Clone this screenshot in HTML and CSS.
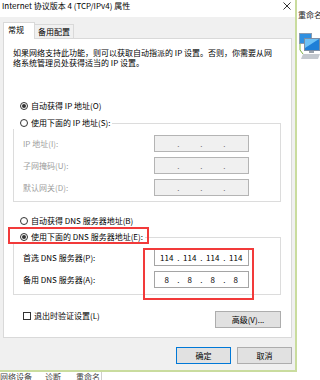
FILE: index.html
```html
<!DOCTYPE html>
<html lang="zh-CN">
<head>
    <meta charset="UTF-8">
    <meta name="viewport" content="width=device-width, initial-scale=1.0">
    <title>Internet 协议版本 4 (TCP/IPv4) 属性</title>
    <link rel="stylesheet" href="styles.css">
</head>
<body>

    <div class="top">
        <div class="dialog">
            <div class="titlebar">
                <span class="title">Internet 协议版本 4 (TCP/IPv4) 属性</span>
                <span class="close">
                    <svg width="8" height="8" viewBox="0 0 8 8"><path d="M0.5 0.5 L7.5 7.5 M7.5 0.5 L0.5 7.5" stroke="#333" stroke-width="1"/></svg>
                </span>
            </div>

            <div class="tabs">
                <div class="tab active">常规</div>
                <div class="tab">备用配置</div>
            </div>

            <div class="panel">
                <p class="intro">如果网络支持此功能，则可以获取自动指派的 IP 设置。否则，你需要从网络系统管理员处获得适当的 IP 设置。</p>

                <div class="option checked"><span class="radio"></span>自动获得 IP 地址(O)</div>

                <fieldset class="group">
                    <legend class="option"><span class="radio"></span>使用下面的 IP 地址(S):</legend>
                    <div class="field-row disabled">
                        <span class="label">IP 地址(I):</span>
                        <div class="ipbox"><span class="octet"></span><span class="dot">.</span><span class="octet"></span><span class="dot">.</span><span class="octet"></span><span class="dot">.</span><span class="octet"></span></div>
                    </div>
                    <div class="field-row disabled">
                        <span class="label">子网掩码(U):</span>
                        <div class="ipbox"><span class="octet"></span><span class="dot">.</span><span class="octet"></span><span class="dot">.</span><span class="octet"></span><span class="dot">.</span><span class="octet"></span></div>
                    </div>
                    <div class="field-row disabled">
                        <span class="label">默认网关(D):</span>
                        <div class="ipbox"><span class="octet"></span><span class="dot">.</span><span class="octet"></span><span class="dot">.</span><span class="octet"></span><span class="dot">.</span><span class="octet"></span></div>
                    </div>
                </fieldset>

                <div class="option option-dns"><span class="radio"></span>自动获得 DNS 服务器地址(B)</div>

                <fieldset class="group group-dns">
                    <legend class="option checked"><span class="radio"></span>使用下面的 DNS 服务器地址(E):</legend>
                    <div class="field-row">
                        <span class="label">首选 DNS 服务器(P):</span>
                        <div class="ipbox"><span class="octet">114</span><span class="dot">.</span><span class="octet">114</span><span class="dot">.</span><span class="octet">114</span><span class="dot">.</span><span class="octet">114</span></div>
                    </div>
                    <div class="field-row">
                        <span class="label">备用 DNS 服务器(A):</span>
                        <div class="ipbox"><span class="octet">8</span><span class="dot">.</span><span class="octet">8</span><span class="dot">.</span><span class="octet">8</span><span class="dot">.</span><span class="octet">8</span></div>
                    </div>
                </fieldset>

                <div class="bottom-row">
                    <div class="check-row"><span class="checkbox"></span>退出时验证设置(L)</div>
                    <button class="btn btn-adv">高级(V)...</button>
                </div>

                <!-- red annotation boxes -->
                <div class="mark mark-radio"></div>
                <div class="mark mark-dns"></div>
            </div>

            <div class="actions">
                <button class="btn default">确定</button>
                <button class="btn">取消</button>
            </div>
        </div>

        <div class="side">
            <div class="side-label">重命名此连接</div>
            <svg class="net-icon" width="23" height="28" viewBox="0 0 23 28">
                <rect x="2" y="1" width="13" height="11" fill="#8a9bb0"/>
                <rect x="3" y="2" width="11" height="9" fill="#2f8fe0"/>
                <rect x="7" y="6" width="16" height="13" fill="#7d8ea4"/>
                <rect x="8" y="7" width="14" height="11" fill="#1f7fd8"/>
                <path d="M8 7 L22 7 L8 16 Z" fill="#6ec1f6"/>
                <rect x="12" y="19" width="5" height="2" fill="#9aa3ad"/>
                <path d="M6 22 L23 22 L21 27 L4 27 Z" fill="#c4c9cf"/>
                <path d="M3 12 L3 18 L6 22" stroke="#7cb342" stroke-width="1" fill="none"/>
            </svg>
        </div>
    </div>

    <div class="cmdbar">
        <span class="cmd">网络设备</span>
        <span class="cmd cmd-diag">诊断</span>
        <span class="cmd cmd-rename">重命名</span>
        <span class="cmd-sep"></span>
    </div>

</body>
</html>
```

FILE: styles.css
```css
* {
    box-sizing: border-box;
}

body {
    margin: 0;
    width: 320px;
    height: 380px;
    overflow: hidden;
    background-color: #fff;
    font-family: "Noto Sans CJK SC", "Noto Sans", sans-serif;
    font-size: 8px;
    color: #000;
}

.top {
    display: flex;
    height: 372px;
}

.dialog {
    width: 297px;
    flex: none;
    display: flex;
    flex-direction: column;
    background-color: #f0f0f0;
    border-right: 2px solid #c9dc9e;
    border-bottom: 2px solid #c9dc9e;
}

.titlebar {
    height: 17px;
    flex: none;
    display: flex;
    align-items: flex-start;
    padding-left: 2px;
    background-color: #fff;
}

.title {
    line-height: 12px;
}

.close {
    margin-left: auto;
    width: 16px;
    height: 12px;
    display: flex;
    align-items: center;
    justify-content: center;
}

.tabs {
    display: flex;
    align-items: flex-end;
    height: 16px;
    margin-top: 5px;
    padding-left: 3px;
    flex: none;
}

.tab {
    height: 14px;
    line-height: 13px;
    padding: 0 3px;
    background-color: #f0f0f0;
    border: 1px solid #d9d9d9;
    border-left: none;
    border-bottom: none;
}

.tab.active {
    width: 32px;
    height: 17px;
    line-height: 14px;
    padding: 0 0 0 4px;
    margin-bottom: -1px;
    background-color: #fff;
    border-left: 1px solid #d9d9d9;
    position: relative;
    z-index: 1;
}

.panel {
    position: relative;
    height: 300px;
    flex: none;
    margin: 0 3px;
    padding: 9px 10px 0 9px;
    background-color: #fff;
    border: 1px solid #d9d9d9;
}

.intro {
    margin: 0;
    max-width: 264px;
    line-height: 10px;
}

.option {
    display: flex;
    align-items: center;
    height: 12px;
    line-height: 12px;
    padding-left: 7px;
    margin-top: 32px;
}

.radio {
    width: 8px;
    height: 8px;
    flex: none;
    margin-right: 3px;
    border: 1px solid #333;
    border-radius: 50%;
    background-color: #fff;
    display: flex;
    align-items: center;
    justify-content: center;
}

.checked .radio::after {
    content: "";
    width: 4px;
    height: 4px;
    border-radius: 50%;
    background-color: #333;
}

.group {
    margin: 5px 0 0;
    padding: 6px 8px 5px 9px;
    border: 1px solid #dcdcdc;
    min-width: 0;
}

.group legend.option {
    margin: 0 0 0 -10px;
    padding: 0 2px 0 7px;
}

.option-dns {
    margin-top: 13px;
}

.group-dns {
    margin-top: 4px;
    padding-bottom: 6px;
}

.field-row {
    display: flex;
    align-items: center;
    height: 17px;
}

.field-row + .field-row {
    margin-top: 5px;
}

.field-row .label {
    width: 131px;
    flex: none;
}

.ipbox {
    width: 95px;
    height: 17px;
    display: flex;
    padding-left: 2px;
    line-height: 15px;
    background-color: #fff;
    border: 1px solid #a5a5a5;
}

.octet {
    width: 19.5px;
    text-align: center;
}

.dot {
    width: 3.5px;
    text-align: center;
}

.disabled .label {
    color: #9d9d9d;
}

.disabled .ipbox {
    background-color: #f0f0f0;
    border-color: #b4b4b4;
    color: #6d6d6d;
}

.bottom-row {
    display: flex;
    justify-content: space-between;
    align-items: flex-start;
    margin-top: 15px;
    padding-left: 10px;
}

.check-row {
    display: flex;
    align-items: center;
    height: 12px;
    line-height: 12px;
}

.checkbox {
    width: 8px;
    height: 8px;
    margin-right: 3px;
    border: 1px solid #333;
    background-color: #fff;
}

.btn {
    width: 55px;
    height: 17px;
    padding: 0;
    font: inherit;
    line-height: 15px;
    color: #000;
    background-color: #e1e1e1;
    border: 1px solid #adadad;
}

.btn.default {
    border-color: #0078d7;
}

.btn-adv {
    width: 66px;
    margin-top: 1px;
}

.mark {
    position: absolute;
    border: 2px solid #f23a3a;
}

.mark-radio {
    left: 4px;
    top: 188px;
    width: 141px;
    height: 17px;
}

.mark-dns {
    left: 139px;
    top: 209px;
    width: 111px;
    height: 52px;
}

.actions {
    display: flex;
    justify-content: flex-end;
    gap: 6px;
    margin-top: 9px;
    padding-right: 3px;
}

.side {
    flex: 1;
    overflow: hidden;
    background-color: #fff;
}

.side-label {
    margin-top: 10px;
    padding-left: 1px;
    line-height: 10px;
    white-space: nowrap;
    color: #1e1e1e;
}

.net-icon {
    display: block;
    margin-top: 12px;
}

.cmdbar {
    display: flex;
    height: 8px;
    overflow: hidden;
    line-height: 10px;
    white-space: nowrap;
    color: #444;
}

.cmd-diag {
    margin-left: 13px;
}

.cmd-rename {
    margin-left: 15px;
}

.cmd-sep {
    width: 1px;
    height: 8px;
    margin-left: 1px;
    background-color: #cfcfcf;
}
```
